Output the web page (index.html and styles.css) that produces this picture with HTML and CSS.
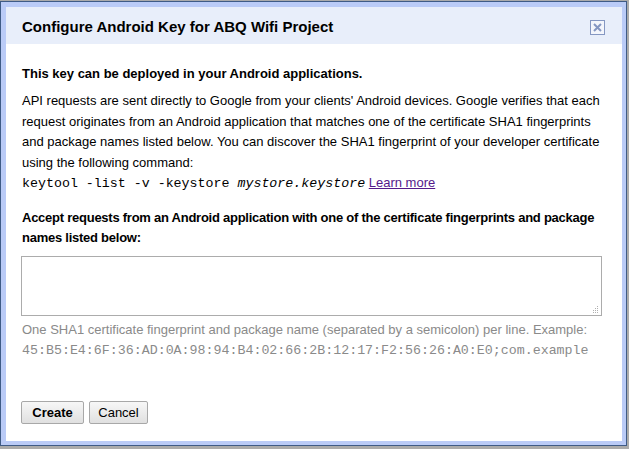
FILE: index.html
```html
<!DOCTYPE html>
<html>
<head>
<meta charset="utf-8">
<link rel="stylesheet" href="styles.css">
</head>
<body>
<div class="dialog">
  <div class="frame">
    <div class="header">
      <div class="title">Configure Android Key for ABQ Wifi Project</div>
      <div class="close">
        <svg width="15" height="15" viewBox="0 0 15 15">
          <rect x="0.5" y="0.5" width="14" height="14" fill="#f4f6fc" stroke="#8597c2"/>
          <path d="M4 4 L11 11 M11 4 L4 11" stroke="#8597c2" stroke-width="2"/>
        </svg>
      </div>
    </div>
    <div class="content">
      <p class="lead">This key can be deployed in your Android applications.</p>
      <p class="desc">API requests are sent directly to Google from your clients' Android devices. Google verifies that each request originates from an Android application that matches one of the certificate SHA1 fingerprints and package names listed below. You can discover the SHA1 fingerprint of your developer certificate using the following command:<br><code>keytool -list -v -keystore <i>mystore.keystore</i></code> <a href="#" class="link">Learn more</a></p>
      <p class="label">Accept requests from an Android application with one of the certificate fingerprints and package names listed below:</p>
      <div class="field">
        <textarea class="input"></textarea>
        <svg class="grip" width="7" height="7" viewBox="0 0 7 7">
          <rect x="5" y="0" width="1" height="1" fill="#b0b0b0"/>
          <rect x="3" y="2" width="1" height="1" fill="#b0b0b0"/>
          <rect x="5" y="2" width="1" height="1" fill="#b0b0b0"/>
          <rect x="1" y="4" width="1" height="1" fill="#b0b0b0"/>
          <rect x="3" y="4" width="1" height="1" fill="#b0b0b0"/>
          <rect x="5" y="4" width="1" height="1" fill="#b0b0b0"/>
          <rect x="1" y="6" width="1" height="1" fill="#b0b0b0"/>
          <rect x="3" y="6" width="1" height="1" fill="#b0b0b0"/>
          <rect x="5" y="6" width="1" height="1" fill="#b0b0b0"/>
        </svg>
      </div>
      <p class="hint">One SHA1 certificate fingerprint and package name (separated by a semicolon) per line. Example:<br><code>45:B5:E4:6F:36:AD:0A:98:94:B4:02:66:2B:12:17:F2:56:26:A0:E0;com.example</code></p>
      <div class="buttons">
        <button class="btn primary">Create</button>
        <button class="btn secondary">Cancel</button>
      </div>
    </div>
  </div>
</div>
</body>
</html>
```
FILE: styles.css
```css
html, body {
  margin: 0;
  padding: 0;
  background: #ababab;
  height: 449px;
  overflow: hidden;
}
.dialog {
  margin-top: 1px;
  width: 627px;
  height: 445px;
  box-sizing: border-box;
  border: 1px solid #3f5b86;
  background: #bacbf7;
  padding: 5px 4px 4px 5px;
}
.frame {
  background: #fff;
  height: 100%;
  font-family: "Liberation Sans", Arial, sans-serif;
  font-size: 13px;
  color: #000;
}
.header {
  background: #e8eefa;
  height: 37px;
  display: flex;
  align-items: center;
  justify-content: space-between;
  padding: 0 17px 0 16px;
}
.title {
  font-weight: bold;
  font-size: 15px;
  margin-top: 2px;
}
.close {
  display: flex;
  margin-top: 3px;
}
.content {
  padding: 20px 16px 0 16px;
}
p {
  margin: 0;
}
.lead {
  font-weight: bold;
  line-height: 20px;
}
.desc {
  margin-top: 7px;
  line-height: 20.5px;
}
code {
  font-family: "Liberation Mono", "Courier New", monospace;
  font-size: 13.3px;
}
.link {
  color: #551a8b;
  text-decoration: underline;
}
.label {
  margin-top: 13px;
  font-weight: bold;
  line-height: 20px;
  letter-spacing: -0.25px;
}
.field {
  position: relative;
  margin-top: 8px;
  margin-left: -1px;
  width: 581px;
  height: 60px;
}
.input {
  display: block;
  width: 100%;
  height: 100%;
  box-sizing: border-box;
  border: 1px solid #acacac;
  margin: 0;
  resize: none;
  font-family: "Liberation Sans", Arial, sans-serif;
  padding: 2px;
  outline: none;
}
.grip {
  position: absolute;
  right: 3px;
  bottom: 3px;
}
.hint {
  margin-top: 4px;
  color: #8a8a8a;
  line-height: 20px;
}
.buttons {
  margin-top: 40px;
  display: flex;
  gap: 5px;
  margin-left: -1px;
}
.btn {
  height: 23px;
  box-sizing: border-box;
  border: 1px solid #a8a8a8;
  border-radius: 2px;
  background: linear-gradient(#f7f7f7, #e0e0e0);
  font-family: "Liberation Sans", Arial, sans-serif;
  font-size: 13px;
  color: #000;
  padding: 0;
}
.primary {
  font-weight: bold;
  width: 63px;
}
.secondary {
  width: 59px;
}
```
